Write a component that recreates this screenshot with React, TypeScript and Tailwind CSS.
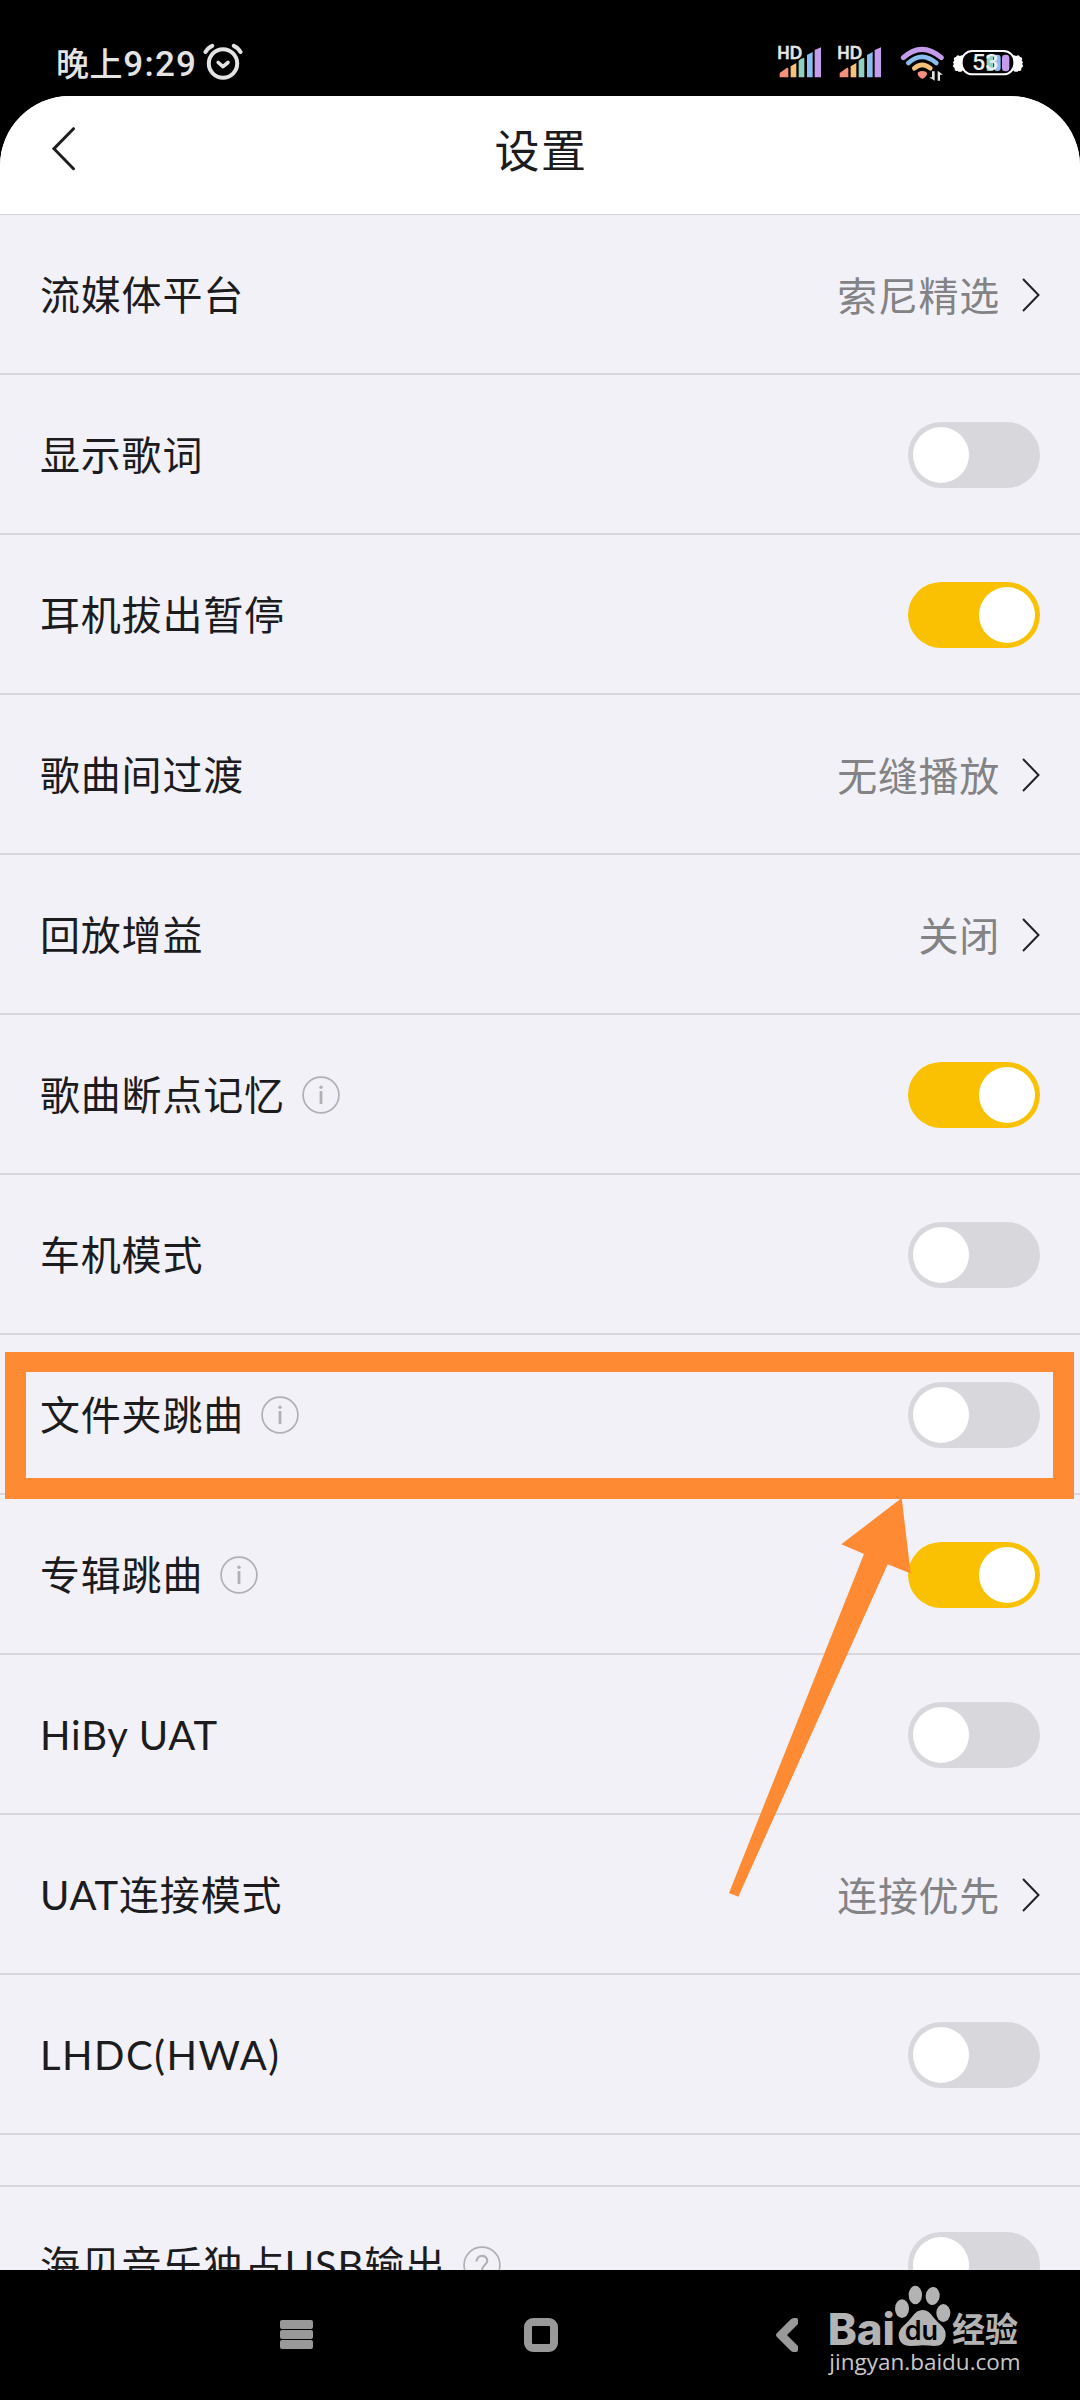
import type { ReactNode } from 'react'

type Hint = 'i' | '?'

type Setting = {
  label: string
  hint?: Hint
  value?: string
  on?: boolean
  wide?: boolean
}

const settings: Setting[] = [
  { label: '流媒体平台', value: '索尼精选' },
  { label: '显示歌词', on: false },
  { label: '耳机拔出暂停', on: true },
  { label: '歌曲间过渡', value: '无缝播放' },
  { label: '回放增益', value: '关闭' },
  { label: '歌曲断点记忆', hint: 'i', on: true },
  { label: '车机模式', on: false },
  { label: '文件夹跳曲', hint: 'i', on: false },
  { label: '专辑跳曲', hint: 'i', on: true },
  { label: 'HiBy UAT', on: false },
  { label: 'UAT连接模式', value: '连接优先' },
  { label: 'LHDC(HWA)', on: false, wide: true },
]

function AlarmIcon() {
  return (
    <svg width="40" height="38" viewBox="0 0 40 38" fill="none" stroke="#e4e4e4" strokeLinecap="round" strokeLinejoin="round">
      <circle cx="20" cy="20.5" r="14.2" strokeWidth="4" />
      <path d="M15.2 19.5l4.8 4.2 5-4.2" strokeWidth="3.6" />
      <path d="M2.5 9Q5 4.600 9.200 2.800M30.800 2.800Q35 4.600 37.500 9" strokeWidth="4" />
    </svg>
  )
}

function SignalIcon() {
  return (
    <svg width="44" height="34" viewBox="0 0 132 102" className="overflow-visible">
      <path d="M5 94V81L26 66Q31 64 31 69V94Z" fill="#f5907f" />
      <path d="M38 94V61L55 51V94Z" fill="#f6c27a" />
      <path d="M62 94V44Q68 36 79 35V94Z" fill="#8fd0c0" />
      <path d="M87 94V27L104 18V94Z" fill="#8abdf0" />
      <path d="M110 94V12L129 4V94Z" fill="#c39cec" />
      <text x="-2" y="39" textLength="74" lengthAdjust="spacingAndGlyphs" fontSize="49" fontWeight="700" fill="#e4e4e4" stroke="#e4e4e4" strokeWidth="1.5" fontFamily="Lato, sans-serif">HD</text>
    </svg>
  )
}

function WifiIcon() {
  return (
    <svg width="44" height="36" viewBox="0 0 132 108" fill="none" strokeLinecap="round">
      <path d="M10 35Q65-15 124 35" stroke="#c39cec" strokeWidth="15" />
      <path d="M25 51Q66 14 109 51" stroke="#8abdf0" strokeWidth="14" />
      <path d="M43 67Q66 46 91 67" stroke="#f6c27a" strokeWidth="14" />
      <path d="M53 83Q53 75 67 75T81 83Q81 90 67 99Q53 90 53 83Z" fill="#f5907f" />
      <path d="M104 76V104L88 94H96V76ZM113 104V74L129 86H120V104Z" fill="#e4e4e4" />
    </svg>
  )
}

// candy shaped battery with coloured charge segments
function BatteryIcon() {
  return (
    <svg width="72" height="30" viewBox="0 0 216 90" className="overflow-visible">
      <path d="M34 20Q28 16 24 22Q16 14 12 24Q2 24 7 35Q0 39 6 45Q-1 53 8 57Q6 68 16 65Q23 72 32 65ZM182 20Q188 16 192 22Q200 14 204 24Q214 24 209 35Q216 39 210 45Q217 53 208 57Q210 68 200 65Q193 72 184 65Z" fill="#fff" />
      <rect x="29" y="6" width="158" height="70" rx="32" fill="#000" stroke="#fff" strokeWidth="6" />
      <rect x="104" y="17" width="20" height="49" rx="4" fill="#8fd0c0" />
      <rect x="126" y="17" width="20" height="49" rx="9" fill="#8abdf0" />
      <rect x="150" y="17" width="22" height="50" rx="10" fill="#c39cec" />
      <text x="60" y="64" textLength="80" lengthAdjust="spacingAndGlyphs" fontSize="64" fontWeight="500" fill="#eee" fontFamily="Roboto, sans-serif">53</text>
    </svg>
  )
}

function StatusBar() {
  return (
    <div className="flex h-24 items-start justify-between bg-black pr-[56px] pl-[56px]">
      <div className="flex items-start pt-[42px]">
        <span className="h-[40px] text-[33px] leading-[40px] font-medium tracking-[0.6px] whitespace-nowrap text-[#e4e4e4] font-['Noto_Sans_CJK_SC',sans-serif]">
          晚上<span className="text-[35px] tracking-[1.3px] font-['Roboto',sans-serif]">9:29</span>
        </span>
        <span className="mt-px ml-[6px]"><AlarmIcon /></span>
      </div>
      <div className="flex items-start pt-[46px]">
        <SignalIcon />
        <span className="ml-4"><SignalIcon /></span>
        <span className="ml-[18px]"><WifiIcon /></span>
        <span className="mt-[3px] ml-[8px]"><BatteryIcon /></span>
      </div>
    </div>
  )
}

function Toggle({ on }: { on: boolean }) {
  return (
    <div className={on ? 'flex h-[66px] w-[132px] justify-end rounded-full bg-[#f9c102] p-[5px]' : 'flex h-[66px] w-[132px] rounded-full bg-[#d8d7dc] p-[5px]'}>
      <div className="size-14 rounded-full bg-white" />
    </div>
  )
}

function HintIcon({ kind }: { kind: Hint }) {
  return (
    <svg width="38" height="38" viewBox="0 0 38 38" fill="none" stroke="#b1b1b3" strokeWidth="1.7" className="ml-[17px]">
      <circle cx="19" cy="19" r="17.9" />
      {kind === 'i' ? (
        <>
          <path d="M19 15v13" strokeWidth="2.8" />
          <circle cx="19" cy="11.3" r="1.7" fill="#b1b1b3" stroke="none" />
        </>
      ) : (
        <path d="M13.700 15.500c0-7.500 10.600-7 10.600-.8 0 4.200-5.300 4.400-5.300 9.300M19 26.500v2.500" strokeWidth="2.2" />
      )}
    </svg>
  )
}

function Row({ setting, children }: { setting: Setting; children: ReactNode }) {
  return (
    <div className="flex h-40 shrink-0 items-center justify-between border-b-2 border-[#d8d7dc] pr-10 pl-10">
      <div className="flex items-center pt-0.5">
        <span className={`text-[40px] leading-[60px] whitespace-nowrap text-[#1c1c1e] font-['Lato','Noto_Sans_CJK_SC',sans-serif] ${setting.wide ? 'tracking-[1.5px]' : 'tracking-[0.8px]'}`}>
          {setting.label}
        </span>
        {setting.hint && <HintIcon kind={setting.hint} />}
      </div>
      <div className="flex items-center pt-0.5">{children}</div>
    </div>
  )
}

function Control({ setting }: { setting: Setting }) {
  if (setting.value) {
    return (
      <>
        <span className="-mt-[3px] text-[40px] leading-[60px] tracking-[0.7px] text-[#838385] font-['Noto_Sans_CJK_SC',sans-serif]">{setting.value}</span>
        <svg width="18" height="34" viewBox="0 0 18 34" fill="none" stroke="#222225" strokeWidth="2" className="ml-[22px]">
          <path d="M1 1l15.500 16L1 33" />
        </svg>
      </>
    )
  }
  return <Toggle on={!!setting.on} />
}

function Watermark() {
  return (
    <svg width="198" height="96" viewBox="261 549 594 288" className="absolute top-[13px] left-[827px]" fill="#b3b3b3">
      <text x="263" y="735" textLength="202" lengthAdjust="spacingAndGlyphs" fontSize="130" fontWeight="800" fontFamily="Inter, sans-serif">Bai</text>
      <ellipse cx="486" cy="626" rx="21" ry="28" />
      <ellipse cx="526" cy="585" rx="20" ry="28" />
      <ellipse cx="578" cy="588" rx="21" ry="27" transform="rotate(8 578 588)" />
      <ellipse cx="610" cy="639" rx="21" ry="27" />
      <path d="M548 630Q566 630 580 652Q592 666 606 678Q618 690 617 708Q614 738 582 738Q568 736 547 736Q530 738 512 738Q478 738 476 706Q476 690 490 678Q506 664 518 648Q530 630 548 630Z" />
      <text x="494" y="720" textLength="100" lengthAdjust="spacingAndGlyphs" fontSize="80" fontWeight="600" fill="#000" fontFamily="Inter, sans-serif">du</text>
      <text x="636" y="726" textLength="198" lengthAdjust="spacingAndGlyphs" fontSize="102" fontWeight="700" fontFamily="Noto Sans CJK SC, sans-serif">经验</text>
      <text x="268" y="810" textLength="574" lengthAdjust="spacingAndGlyphs" fontSize="67" fontWeight="500" fill="#c8c8c8" fontFamily="Open Sans, sans-serif">jingyan.baidu.com</text>
    </svg>
  )
}

function NavBar() {
  return (
    <div className="relative flex h-[130px] items-start bg-black pt-12 pl-[280px]">
      <div className="mt-0.5 flex w-[33px] flex-col gap-px">
        <div className="h-[9px] rounded-xs bg-[#999]" />
        <div className="h-[9px] rounded-xs bg-[#999]" />
        <div className="h-[9px] rounded-xs bg-[#999]" />
      </div>
      <div className="ml-[211px] size-[34px] rounded-[9px] border-8 border-[#999]" />
      <svg width="22" height="34" viewBox="0 0 22 34" fill="#999" className="ml-[218px]">
        <path d="M14.500 1.500Q16 0 18 0H20.500Q22 0 22 2V6L11 17L22 28V32Q22 34 20 34H18Q16 34 14.500 32.500L1 19Q-1 17 1 15Z" />
      </svg>
      <Watermark />
    </div>
  )
}

export default function App() {
  return (
    <div className="relative flex h-[2400px] w-[1080px] flex-col overflow-hidden bg-black">
      <StatusBar />
      <div className="flex h-[2174px] flex-col overflow-hidden rounded-t-[70px] bg-[#f2f1f7]">
        <div className="grid h-[119px] shrink-0 grid-cols-[1fr_auto_1fr] items-center border-b border-[#d4d4d6] bg-white">
          <svg width="24" height="44" viewBox="0 0 24 44" fill="none" stroke="#1f1f21" strokeWidth="3" strokeLinecap="round" className="mb-3 ml-[52px]">
            <path d="M21.500 1.700L2 21.700l19.500 20" />
          </svg>
          <h1 className="mb-3 pl-0.5 text-[45px] leading-[60px] tracking-[1.5px] text-[#1c1c1e] font-['Noto_Sans_CJK_SC',sans-serif]">设置</h1>
          <span />
        </div>
        {settings.map(s => (
          <Row key={s.label} setting={s}>
            <Control setting={s} />
          </Row>
        ))}
        <div className="h-[52px] shrink-0 border-b-2 border-[#d8d7dc]" />
        <div className="-mt-0.5">
          <Row setting={{ label: '海贝音乐独占USB输出', hint: '?' }}>
            <Toggle on={false} />
          </Row>
        </div>
      </div>
      <NavBar />

      {/* Callout over the folder skip row */}
      <div className="absolute top-[1352px] left-[5px] h-[147px] w-[1069px] border-[21px] border-t-[20px] border-[#fe8a33]" />
      <svg width="184" height="400" viewBox="728 1498 184 400" className="absolute top-[1498px] left-[728px]" fill="#fe8a33">
        <path d="M901.700 1498L841.300 1544.300L864 1553.900L729 1893L738.300 1896.800L887.700 1564.200L910.700 1573.400Z" />
      </svg>
    </div>
  )
}
